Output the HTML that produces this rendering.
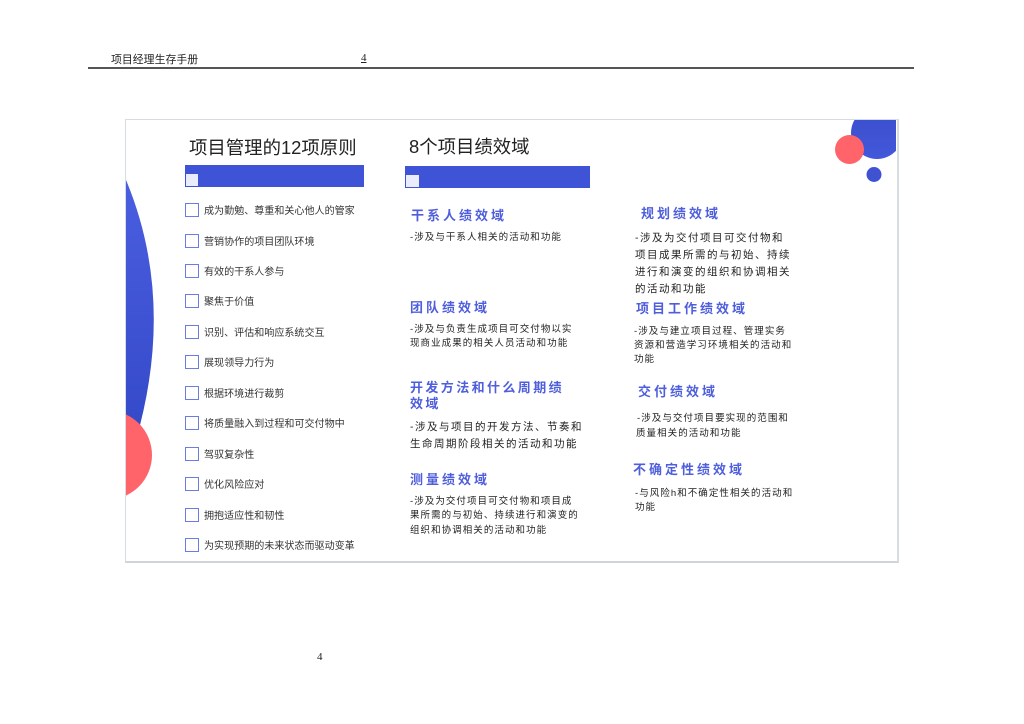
<!DOCTYPE html>
<html lang="zh">
<head>
<meta charset="utf-8">
<title>项目经理生存手册</title>
<style>
html,body{margin:0;padding:0;background:#fff;width:1024px;height:724px;overflow:hidden}
body{position:relative;font-family:"Liberation Sans","Noto Sans CJK SC",sans-serif;color:#222}
.t{position:absolute;white-space:nowrap;line-height:16px;height:16px;filter:blur(0.3px)}
.i{font-size:10.05px;color:#333;left:204px;margin-top:2px}
.c{position:absolute;left:185px;width:12px;height:12px;border:1px solid #6a7de0;background:#fff;margin-top:-1px}
.h{font-size:13px;font-weight:bold;letter-spacing:3px;color:#4f5fdc;margin-top:1px}
.b{font-size:9.5px;letter-spacing:1.05px;color:#222;margin-top:1px}
.m{font-size:10.5px;letter-spacing:1.5px;color:#222;margin-top:1px}
.bar{position:absolute;background:#3f53d6}
.sq{position:absolute;background:#e9ecfa}
</style>
</head>
<body>
<div class="t" style="left:111px;top:52px;font-size:10.9px;color:#222">项目经理生存手册</div>
<div class="t" style="left:361px;top:50px;font-size:11px;font-family:'Liberation Serif',serif;text-decoration:underline;color:#222">4</div>
<div style="position:absolute;left:88px;top:67px;width:826px;height:2px;background:#555"></div>

<div style="position:absolute;left:125px;top:119px;width:771px;height:441px;border:1px solid #d7dce3;border-bottom:2px solid #d0d4da;border-right:2px solid #d7dce3;background:#fff"></div>
<svg width="1024" height="724" style="position:absolute;left:0;top:0">
<defs>
<clipPath id="k"><rect x="126" y="120" width="770" height="440"/></clipPath>
<linearGradient id="g" x1="0" y1="0" x2="0" y2="1"><stop offset="0" stop-color="#3a4ecb"/><stop offset="1" stop-color="#4358da"/></linearGradient>
<linearGradient id="a" x1="0" y1="0" x2="0" y2="1"><stop offset="0" stop-color="#4a5ee0"/><stop offset="1" stop-color="#3449c8"/></linearGradient>
</defs>
<g clip-path="url(#k)">
<path d="M126 180 Q176 300 136 440 L126 440 Z" fill="url(#a)"/>
<circle cx="107.500" cy="455" r="44.500" fill="#ff646a"/>
<circle cx="877" cy="133" r="26" fill="url(#g)"/>
<circle cx="849.500" cy="149.500" r="14.500" fill="#ff646a"/>
<circle cx="874" cy="174.500" r="7.500" fill="#3f53d2"/>
</g>
</svg>

<div class="t" style="left:189px;top:140px;font-size:18.4px;color:#222">项目管理的12项原则</div>
<div class="bar" style="left:185px;top:165px;width:179px;height:22px"></div>
<div class="sq" style="left:186px;top:174px;width:12px;height:12px"></div>
<div class="t" style="left:409px;top:139px;font-size:18.4px;color:#222">8个项目绩效域</div>
<div class="bar" style="left:405px;top:166px;width:185px;height:22px"></div>
<div class="sq" style="left:406px;top:175px;width:13px;height:12px"></div>

<div class="c" style="top:204px"></div><div class="t i" style="top:202px">成为勤勉、尊重和关心他人的管家</div>
<div class="c" style="top:235px"></div><div class="t i" style="top:233px">营销协作的项目团队环境</div>
<div class="c" style="top:265px"></div><div class="t i" style="top:263px">有效的干系人参与</div>
<div class="c" style="top:295px"></div><div class="t i" style="top:293px">聚焦于价值</div>
<div class="c" style="top:326px"></div><div class="t i" style="top:324px">识别、评估和响应系统交互</div>
<div class="c" style="top:356px"></div><div class="t i" style="top:354px">展现领导力行为</div>
<div class="c" style="top:387px"></div><div class="t i" style="top:385px">根据环境进行裁剪</div>
<div class="c" style="top:417px"></div><div class="t i" style="top:415px">将质量融入到过程和可交付物中</div>
<div class="c" style="top:448px"></div><div class="t i" style="top:446px">驾驭复杂性</div>
<div class="c" style="top:478px"></div><div class="t i" style="top:476px">优化风险应对</div>
<div class="c" style="top:509px"></div><div class="t i" style="top:507px">拥抱适应性和韧性</div>
<div class="c" style="top:539px"></div><div class="t i" style="top:537px">为实现预期的未来状态而驱动变革</div>

<div class="t h" style="left:411px;top:207px">干系人绩效域</div>
<div class="t b" style="left:410px;top:229px">-涉及与干系人相关的活动和功能</div>

<div class="t h" style="left:410px;top:299px">团队绩效域</div>
<div class="t b" style="left:410px;top:321px">-涉及与负责生成项目可交付物以实</div>
<div class="t b" style="left:410px;top:335px">现商业成果的相关人员活动和功能</div>

<div class="t h" style="left:410px;top:379px;letter-spacing:2.4px">开发方法和什么周期绩</div>
<div class="t h" style="left:410px;top:395px;letter-spacing:2.4px">效域</div>
<div class="t m" style="left:410px;top:418px">-涉及与项目的开发方法、节奏和</div>
<div class="t m" style="left:410px;top:435px">生命周期阶段相关的活动和功能</div>

<div class="t h" style="left:410px;top:471px">测量绩效域</div>
<div class="t b" style="left:410px;top:493px">-涉及为交付项目可交付物和项目成</div>
<div class="t b" style="left:410px;top:507px">果所需的与初始、持续进行和演变的</div>
<div class="t b" style="left:410px;top:522px">组织和协调相关的活动和功能</div>

<div class="t h" style="left:641px;top:205px">规划绩效域</div>
<div class="t m" style="left:635px;top:229px">-涉及为交付项目可交付物和</div>
<div class="t m" style="left:635px;top:246px">项目成果所需的与初始、持续</div>
<div class="t m" style="left:635px;top:263px">进行和演变的组织和协调相关</div>
<div class="t m" style="left:635px;top:280px">的活动和功能</div>

<div class="t h" style="left:636px;top:300px">项目工作绩效域</div>
<div class="t b" style="left:634px;top:323px">-涉及与建立项目过程、管理实务</div>
<div class="t b" style="left:634px;top:337px">资源和营造学习环境相关的活动和</div>
<div class="t b" style="left:634px;top:351px">功能</div>

<div class="t h" style="left:638px;top:383px">交付绩效域</div>
<div class="t b" style="left:637px;top:410px">-涉及与交付项目要实现的范围和</div>
<div class="t b" style="left:636px;top:425px">质量相关的活动和功能</div>

<div class="t h" style="left:633px;top:461px">不确定性绩效域</div>
<div class="t b" style="left:635px;top:485px">-与风险h和不确定性相关的活动和</div>
<div class="t b" style="left:635px;top:499px">功能</div>

<div class="t" style="left:317px;top:649px;font-size:11px;font-family:'Liberation Serif',serif;color:#222">4</div>
</body>
</html>
